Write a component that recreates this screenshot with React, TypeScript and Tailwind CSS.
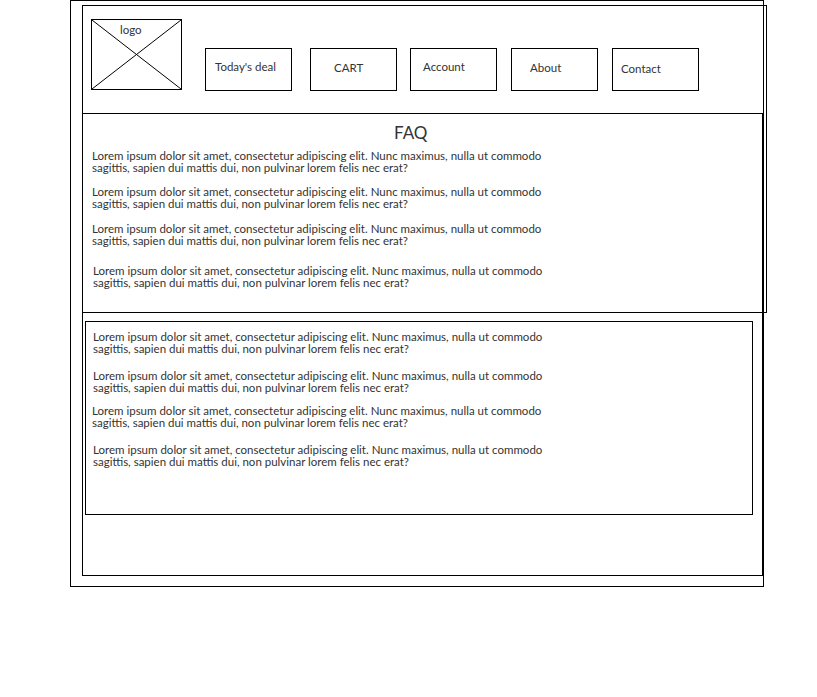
import React from 'react';

const lorem1 = 'Lorem ipsum dolor sit amet, consectetur adipiscing elit. Nunc maximus, nulla ut commodo';
const lorem2 = 'sagittis, sapien dui mattis dui, non pulvinar lorem felis nec erat?';

const Question: React.FC<{ className?: string }> = ({ className = '' }) => (
  <p className={`text-[11.5px] leading-[12px] text-[#333] whitespace-nowrap ${className}`}>
    {lorem1}
    <br />
    {lorem2}
  </p>
);

const navItems = [
  { label: "Today's deal", className: 'ml-[23px] pl-[9px] pt-[12px]' },
  { label: 'CART', className: 'ml-[18px] pl-[23px] pt-[13px]' },
  { label: 'Account', className: 'ml-[13px] pl-[12px] pt-[12px]' },
  { label: 'About', className: 'ml-[14px] pl-[18px] pt-[13px]' },
  { label: 'Contact', className: 'ml-[14px] pl-[8px] pt-[14px]' },
];

const App: React.FC = () => {
  return (
    <div className="w-[817px] h-[697px] bg-white font-['Lato',sans-serif]">
      <div className="ml-[70px] w-[694px] h-[587px] border border-black">
        {/* header */}
        <div className="ml-[11px] mt-[4px] w-[685px] h-[308px] border border-black flex flex-col">
          <div className="h-[107px] flex items-start">
            <div className="relative ml-[8px] mt-[13px] w-[91px] h-[71px] border border-black">
              <svg className="absolute inset-0" width="89" height="69" viewBox="0 0 89 69">
                <line x1="0" y1="0" x2="89" y2="69" stroke="black" strokeWidth="1" />
                <line x1="89" y1="0" x2="0" y2="69" stroke="black" strokeWidth="1" />
              </svg>
              <span className="relative block pl-[28px] pt-[4px] text-[11.5px] leading-[12px] text-[#333]">logo</span>
            </div>
            {navItems.map((item) => (
              <div
                key={item.label}
                className={`mt-[42px] w-[87px] h-[43px] border border-black text-[11.5px] leading-[12px] text-[#333] ${item.className}`}
              >
                {item.label}
              </div>
            ))}
          </div>
          {/* FAQ */}
          <div className="-ml-px -mb-px w-[681px] h-[200px] border border-black">
            <h1 className="mt-[8px] pl-[311px] text-[17px] leading-[22px] text-[#333]">FAQ</h1>
            <Question className="mt-[6px] ml-[9px]" />
            <Question className="mt-[12px] ml-[9px]" />
            <Question className="mt-[13px] ml-[9px]" />
            <Question className="mt-[18px] ml-[10px]" />
          </div>
        </div>
        {/* body */}
        <div className="ml-[11px] -mt-px w-[681px] h-[264px] border border-black">
          <div className="ml-[2px] mt-[8px] w-[668px] h-[194px] border border-black">
            <Question className="mt-[9px] ml-[7px]" />
            <Question className="mt-[15px] ml-[7px]" />
            <Question className="mt-[11px] ml-[6px]" />
            <Question className="mt-[15px] ml-[7px]" />
          </div>
        </div>
      </div>
    </div>
  );
};

export default App;
